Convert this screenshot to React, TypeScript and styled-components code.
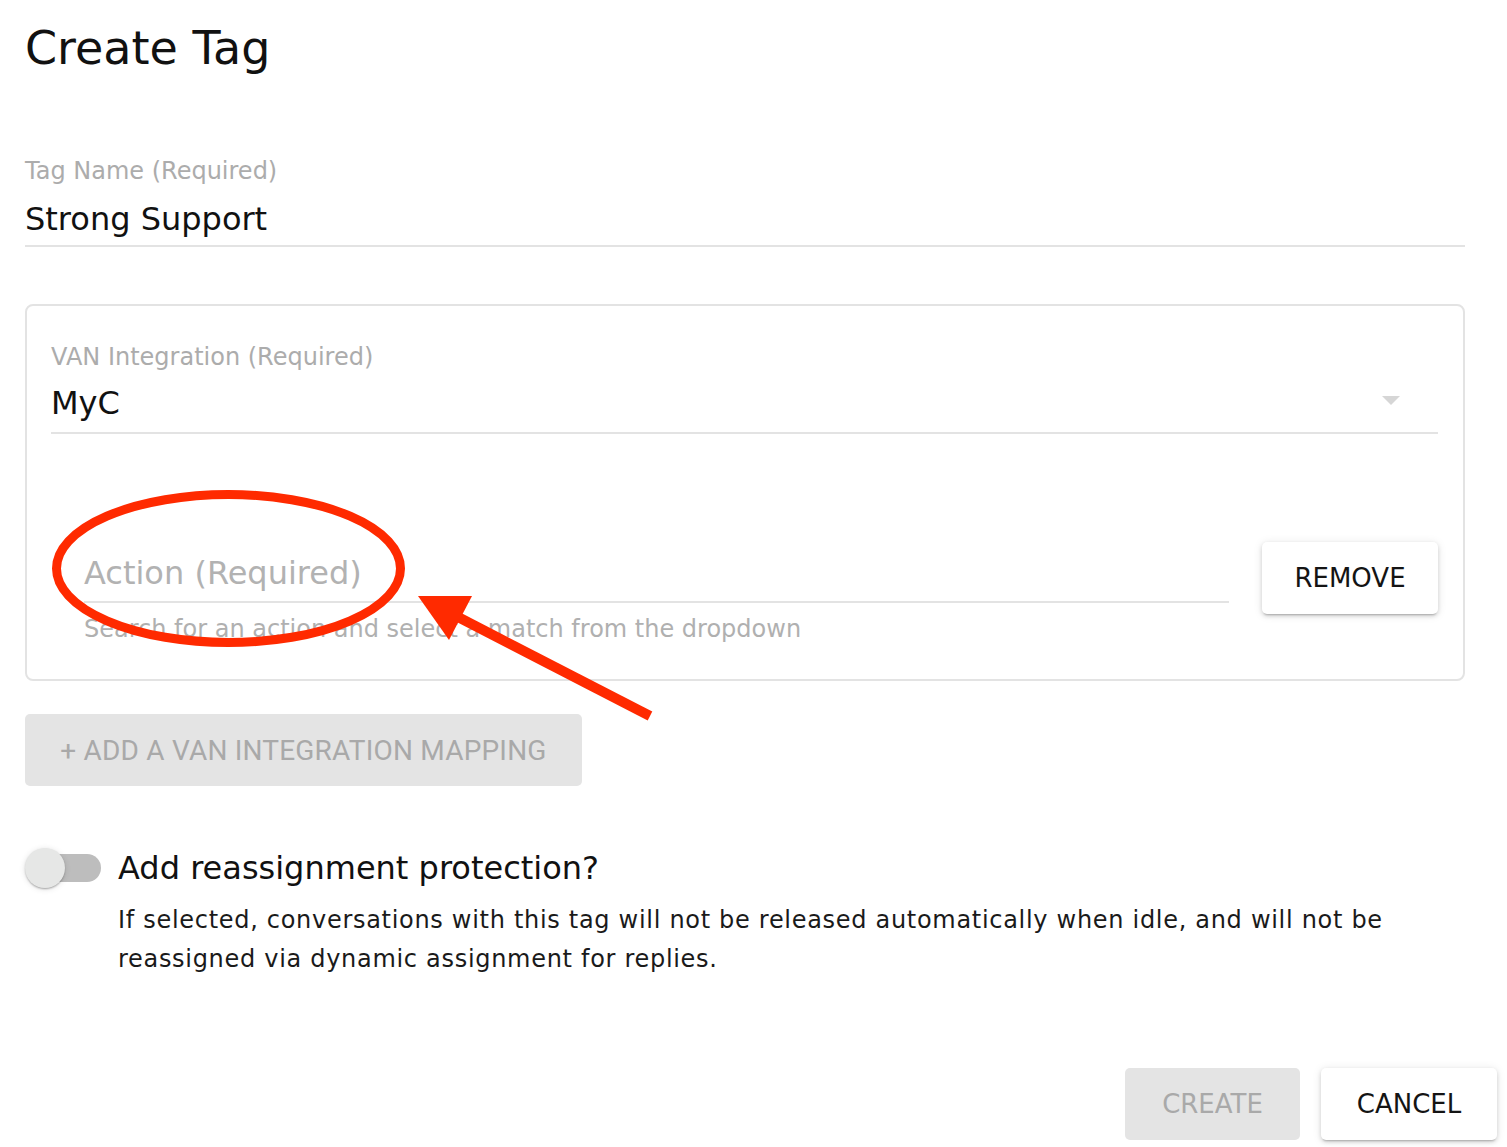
import React from "react";
import styled, { createGlobalStyle } from "styled-components";

const FONT = `"DejaVu Sans", "Open Sans", sans-serif`;

const Global = createGlobalStyle`
  html, body { margin: 0; padding: 0; background: #fff; }
  body { font-family: ${FONT}; color: #141414; }
  * { box-sizing: border-box; }
`;

const Page = styled.div`
  position: relative;
  width: 1507px;
  height: 1147px;
  overflow: hidden;
  padding: 19px 10px 0 25px;
`;

const Title = styled.h1`
  margin: 0;
  font-size: 46px;
  font-weight: 400;
  line-height: 58px;
  color: #111;
`;

const Content = styled.div`
  width: 1440px;
  display: flex;
  flex-direction: column;
`;

const Field = styled.div<{ $top?: number }>`
  display: flex;
  flex-direction: column;
  margin-top: ${(p) => p.$top ?? 0}px;
  flex: 1;
`;

const Label = styled.div`
  font-size: 24px;
  line-height: 32px;
  color: #acacac;
  margin-bottom: 10px;
`;

const Value = styled.div<{ $placeholder?: boolean; $pb?: number; $mt?: number }>`
  position: relative;
  margin-top: ${(p) => p.$mt ?? 0}px;
  font-size: 32px;
  line-height: 44px;
  color: ${(p) => (p.$placeholder ? "#b2b2b2" : "#111")};
  padding-bottom: ${(p) => p.$pb ?? 4}px;
  border-bottom: 2px solid #e3e3e3;
`;

const Caret = styled.span`
  position: absolute;
  right: 38px;
  top: 15px;
  width: 0;
  height: 0;
  border-left: 9px solid transparent;
  border-right: 9px solid transparent;
  border-top: 9px solid #d6d6d6;
`;

const Helper = styled.div`
  margin-top: 10px;
  font-size: 24px;
  line-height: 32px;
  color: #b0b0b0;
`;

const Box = styled.div`
  margin-top: 57px;
  border: 2px solid #e3e3e3;
  border-radius: 8px;
  padding: 35px 25px 34px 24px;
  display: flex;
  flex-direction: column;
`;

const ActionRow = styled.div`
  margin-top: 108px;
  padding-left: 33px;
  display: flex;
  align-items: flex-start;
  gap: 33px;
`;

const Button = styled.button<{ $disabled?: boolean; $w: number }>`
  width: ${(p) => p.$w}px;
  height: 72px;
  flex: none;
  border: none;
  border-radius: 5px;
  font-family: ${FONT};
  font-size: 26px;
  background: ${(p) => (p.$disabled ? "#e4e4e4" : "#fff")};
  color: ${(p) => (p.$disabled ? "#a9a9a9" : "#141414")};
  box-shadow: ${(p) =>
    p.$disabled
      ? "none"
      : "0 3px 2px -2px rgba(0,0,0,0.2), 0 2px 4px 0 rgba(0,0,0,0.14), 0 1px 10px 0 rgba(0,0,0,0.1)"};
  display: flex;
  align-items: center;
  justify-content: center;
  padding: 0;
`;

const AddButton = styled(Button)`
  margin-top: 33px;
  font-family: Roboto, sans-serif;
  font-size: 28px;
  letter-spacing: 0.2px;
`;

const ToggleRow = styled.div`
  margin-top: 59px;
  display: flex;
  gap: 17px;
`;

const Switch = styled.div`
  position: relative;
  width: 76px;
  height: 40px;
  flex: none;
  margin-top: 3px;
`;

const Track = styled.div`
  position: absolute;
  left: 5px;
  top: 6px;
  width: 71px;
  height: 28px;
  border-radius: 14px;
  background: #bdbdbd;
`;

const Thumb = styled.div`
  position: absolute;
  left: 0;
  top: 0;
  width: 40px;
  height: 40px;
  border-radius: 50%;
  background: #e6e7e6;
  box-shadow: 0 2px 2px -1px rgba(0,0,0,0.2), 0 1px 2px 0 rgba(0,0,0,0.14), 0 1px 6px 0 rgba(0,0,0,0.12);
`;

const ToggleText = styled.div`
  display: flex;
  flex-direction: column;
`;

const ToggleTitle = styled.div`
  font-size: 32px;
  line-height: 46px;
  color: #111;
`;

const ToggleDesc = styled.div`
  font-size: 24px;
  line-height: 39px;
  letter-spacing: 0.7px;
  color: #1a1a1a;
  margin-top: 10px;
  max-width: 1320px;
`;

const Actions = styled.div`
  position: absolute;
  right: 10px;
  bottom: 7px;
  display: flex;
  gap: 21px;
`;

const Overlay = styled.svg`
  position: absolute;
  left: 0;
  top: 0;
  pointer-events: none;
`;

export default function App() {
  return (
    <>
      <Global />
      <Page>
        <Title>Create Tag</Title>
        <Content>
          <Field $top={78}>
            <Label>Tag Name (Required)</Label>
            <Value>Strong Support</Value>
          </Field>
          <Box>
            <Field>
              <Label>VAN Integration (Required)</Label>
              <Value $mt={-2} $pb={7}>
                MyC
                <Caret />
              </Value>
            </Field>
            <ActionRow>
              <Field $top={9}>
                <Value $placeholder $pb={6}>Action (Required)</Value>
                <Helper>Search for an action and select a match from the dropdown</Helper>
              </Field>
              <Button $w={176}>REMOVE</Button>
            </ActionRow>
          </Box>
          <AddButton $disabled $w={557}>+ ADD A VAN INTEGRATION MAPPING</AddButton>
          <ToggleRow>
            <Switch>
              <Track />
              <Thumb />
            </Switch>
            <ToggleText>
              <ToggleTitle>Add reassignment protection?</ToggleTitle>
              <ToggleDesc>
                If selected, conversations with this tag will not be released automatically when idle, and will not be reassigned via dynamic assignment for replies.
              </ToggleDesc>
            </ToggleText>
          </ToggleRow>
        </Content>
        <Actions>
          <Button $disabled $w={175}>CREATE</Button>
          <Button $w={176}>CANCEL</Button>
        </Actions>
        <Overlay width="1507" height="1147" viewBox="0 0 1507 1147">
          <ellipse cx="228.5" cy="568.5" rx="172" ry="74" fill="none" stroke="#ff2a00" strokeWidth="9" />
          <line x1="458" y1="617" x2="650" y2="716" stroke="#ff2a00" strokeWidth="10" />
          <polygon points="418,596 472,596 449,640" fill="#ff2a00" />
        </Overlay>
      </Page>
    </>
  );
}
